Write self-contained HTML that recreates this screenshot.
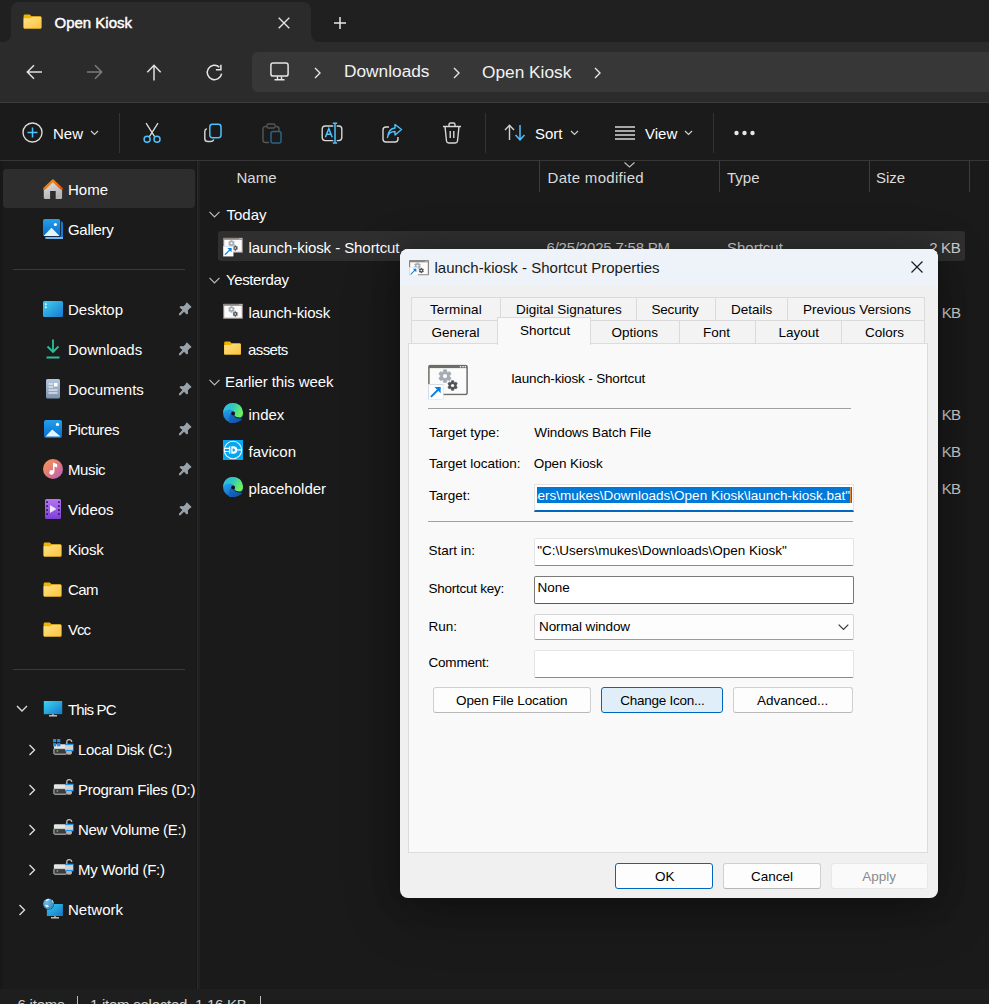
<!DOCTYPE html>
<html><head><meta charset="utf-8">
<style>
*{margin:0;padding:0;box-sizing:border-box}
html,body{width:989px;height:1004px;overflow:hidden;background:#1c1c1c;font-family:"Liberation Sans",sans-serif;color:#fff}
.a{position:absolute}
.t{position:absolute;white-space:nowrap;line-height:1}
svg.a{overflow:visible}
.nav{font-size:15px;color:#fff}
.fl{font-size:15px;color:#fff}
.hdr{font-size:15px;color:#dadada}
.kb{font-size:15px;color:#cfcfcf}
.d{font-size:13.5px;color:#000}
.tab{position:absolute;top:0;height:23px;border:1px solid #d9d9d9;border-bottom:none;background:#f0f0f0}
</style></head><body>
<svg width="0" height="0" style="position:absolute">
<defs>
 <linearGradient id="gFold" x1="0" y1="0" x2="1" y2="1"><stop offset="0" stop-color="#ffe38a"/><stop offset="1" stop-color="#f9c33c"/></linearGradient>
 <symbol id="folder" viewBox="0 0 20 16">
  <path d="M0.5 2 Q0.5 0.5 2 0.5 H7 L9 2.5 H18 Q19.5 2.5 19.5 4 V14.5 Q19.5 15.5 18.5 15.5 H1.5 Q0.5 15.5 0.5 14.5 Z" fill="#f0b400"/>
  <path d="M0.5 4.5 H8 L9.5 3 H18.5 Q19.5 3 19.5 4 V14.5 Q19.5 15.5 18.5 15.5 H1.5 Q0.5 15.5 0.5 14.5 Z" fill="url(#gFold)"/>
 </symbol>
 <symbol id="pin" viewBox="0 0 14 14">
  <path d="M8.4 0.6 Q9 0.3 9.6 0.9 L13.1 4.4 Q13.7 5 13.2 5.6 L11.6 6.6 L9.8 8.6 L10.1 11.4 L8.8 12.6 L6 9.7 L2.4 13.2 L1 13.2 L1 11.8 L4.4 8.1 L1.4 5.2 L2.8 4 L5.4 4.2 L7.4 2.4 Z" fill="#9aa2a9"/>
 </symbol>
 <symbol id="drive" viewBox="0 0 21 17">
  <path d="M2 5.2 H13.5 V10 H0.9 V6.5 Q0.9 5.2 2 5.2 Z" fill="#e4e4e4"/>
  <rect x="0.9" y="9.6" width="13" height="5.6" rx="0.8" fill="#3c3c3c" stroke="#d4d4d4" stroke-width="0.9"/>
  <circle cx="4.4" cy="11.9" r="0.85" fill="#3ddc3d"/>
  <path d="M13.8 5.2 V3.2 Q13.8 0.6 16.3 0.6 Q18.8 0.6 18.8 3" stroke="#b9b9b9" stroke-width="1.3" fill="none"/>
  <ellipse cx="16.2" cy="13.6" rx="2.8" ry="2.2" fill="#b5b5b5"/>
  <rect x="12" y="4.9" width="8.3" height="7.3" fill="#d2d2d2"/>
  <rect x="12" y="4.9" width="8.3" height="1.2" fill="#1e90e8"/>
  <rect x="12" y="10.9" width="8.3" height="1.2" fill="#1e90e8"/>
 </symbol>
 <symbol id="edge" viewBox="0 0 20 20">
  <defs>
   <linearGradient id="eg1" x1="0" y1="0" x2="0.3" y2="1"><stop offset="0" stop-color="#33b5f5"/><stop offset="1" stop-color="#1170cc"/></linearGradient>
   <linearGradient id="eg2" x1="0" y1="0" x2="1" y2="0.4"><stop offset="0" stop-color="#30b8ec"/><stop offset="0.5" stop-color="#2fc7c0"/><stop offset="1" stop-color="#6ff05a"/></linearGradient>
   <linearGradient id="eg3" x1="0" y1="0" x2="1" y2="1"><stop offset="0" stop-color="#1b6fd0"/><stop offset="1" stop-color="#0b4f9e"/></linearGradient>
  </defs>
  <circle cx="10" cy="10" r="10" fill="url(#eg1)"/>
  <path d="M0.2 8.5 Q1.5 0.2 10 0 Q19 0.2 20 9.5 Q20 14.2 16 14.6 Q12.6 14.8 11.4 12.8 Q12.8 10.6 11.2 8.8 Q9.6 7.2 6.6 6.6 Q2.6 6.4 0.2 9.6 Z" fill="url(#eg2)"/>
  <path d="M6.2 20 Q5.2 13.5 7.6 11 Q8.8 9.8 10.2 11.6 Q12.2 15.6 17 15.8 Q18.6 15.8 19.6 15.2 Q17.5 19.5 10 20 Z" fill="url(#eg3)"/>
  <path d="M10.3 12 Q12.3 15.2 16.8 15.2 Q18.8 15.2 19.7 14.4" stroke="#141414" stroke-width="0.9" fill="none"/>
  <circle cx="10.1" cy="10.4" r="1.9" fill="#141414"/>
 </symbol>
 <symbol id="gears" viewBox="0 0 40 31">
  <rect x="0.9" y="0.9" width="38.2" height="29.2" rx="1.5" fill="#fbfbfb" stroke="#6f6b66" stroke-width="1.5"/>
  <rect x="1" y="1" width="38" height="2.6" fill="#6f6b66"/>
  <circle cx="32.5" cy="2.3" r="0.8" fill="#fff"/><circle cx="35" cy="2.3" r="0.8" fill="#fff"/><circle cx="37.3" cy="2.3" r="0.8" fill="#fff"/>
  <path d="M15.13 7.40 L15.60 5.35 L18.40 5.35 L18.87 7.40 L19.70 7.88 L21.71 7.27 L23.11 9.69 L21.57 11.12 L21.57 12.08 L23.11 13.51 L21.71 15.93 L19.70 15.32 L18.87 15.80 L18.40 17.85 L15.60 17.85 L15.13 15.80 L14.30 15.32 L12.29 15.93 L10.89 13.51 L12.43 12.08 L12.43 11.12 L10.89 9.69 L12.29 7.27 L14.30 7.88Z" fill="#a5abb2" stroke="#a5abb2" stroke-width="0.8" stroke-linejoin="round"/>
  <circle cx="17" cy="11.6" r="2.1" fill="#fbfbfb"/>
  <path d="M23.18 17.80 L23.53 16.22 L25.67 16.22 L26.02 17.80 L26.66 18.17 L28.21 17.68 L29.28 19.53 L28.08 20.63 L28.08 21.37 L29.28 22.47 L28.21 24.32 L26.66 23.83 L26.02 24.20 L25.67 25.78 L23.53 25.78 L23.18 24.20 L22.54 23.83 L20.99 24.32 L19.92 22.47 L21.12 21.37 L21.12 20.63 L19.92 19.53 L20.99 17.68 L22.54 18.17Z" fill="#4f5358" stroke="#4f5358" stroke-width="0.7" stroke-linejoin="round"/>
  <circle cx="24.6" cy="21" r="1.6" fill="#fbfbfb"/>
 </symbol>
 <symbol id="gearsS" viewBox="0 0 40 31">
  <rect x="1.2" y="1.2" width="37.6" height="28.6" rx="1" fill="#fbfbfb" stroke="#8a8580" stroke-width="2.4"/>
  <rect x="1" y="1" width="38" height="3.6" fill="#8a8580"/>
  <circle cx="32.5" cy="2.3" r="0.8" fill="#fff"/><circle cx="35" cy="2.3" r="0.8" fill="#fff"/><circle cx="37.3" cy="2.3" r="0.8" fill="#fff"/>
  <path d="M15.13 7.40 L15.60 5.35 L18.40 5.35 L18.87 7.40 L19.70 7.88 L21.71 7.27 L23.11 9.69 L21.57 11.12 L21.57 12.08 L23.11 13.51 L21.71 15.93 L19.70 15.32 L18.87 15.80 L18.40 17.85 L15.60 17.85 L15.13 15.80 L14.30 15.32 L12.29 15.93 L10.89 13.51 L12.43 12.08 L12.43 11.12 L10.89 9.69 L12.29 7.27 L14.30 7.88Z" fill="#a5abb2" stroke="#a5abb2" stroke-width="0.8" stroke-linejoin="round"/>
  <circle cx="17" cy="11.6" r="2.1" fill="#fbfbfb"/>
  <path d="M23.18 17.80 L23.53 16.22 L25.67 16.22 L26.02 17.80 L26.66 18.17 L28.21 17.68 L29.28 19.53 L28.08 20.63 L28.08 21.37 L29.28 22.47 L28.21 24.32 L26.66 23.83 L26.02 24.20 L25.67 25.78 L23.53 25.78 L23.18 24.20 L22.54 23.83 L20.99 24.32 L19.92 22.47 L21.12 21.37 L21.12 20.63 L19.92 19.53 L20.99 17.68 L22.54 18.17Z" fill="#4f5358" stroke="#4f5358" stroke-width="0.7" stroke-linejoin="round"/>
  <circle cx="24.6" cy="21" r="1.6" fill="#fbfbfb"/>
 </symbol>
 <symbol id="arrowov" viewBox="0 0 15 15">
  <rect x="0.5" y="0.5" width="14.5" height="14.5" fill="#fff" stroke="#d5dbe6" stroke-width="1"/>
  <path d="M3.3 12 L11.2 4.1" stroke="#0a7fe0" stroke-width="1.9" stroke-linecap="round"/>
  <path d="M6.3 3 H12.2 V8.9 Z" fill="#0a7fe0"/>
 </symbol>
</defs>
</svg>

<!-- ============ TAB STRIP ============ -->
<div class="a" style="left:0;top:0;width:989px;height:42px;background:#202020"></div>
<div class="a" style="left:11px;top:2px;width:300px;height:40px;background:#2b2b2b;border-radius:8px 8px 0 0"></div>
<!-- inverted corners -->
<div class="a" style="left:3px;top:34px;width:8px;height:8px;background:#2b2b2b"></div>
<div class="a" style="left:3px;top:34px;width:8px;height:8px;background:#202020;border-radius:0 0 8px 0"></div>
<div class="a" style="left:311px;top:34px;width:8px;height:8px;background:#2b2b2b"></div>
<div class="a" style="left:311px;top:34px;width:8px;height:8px;background:#202020;border-radius:0 0 0 8px"></div>
<svg class="a" style="left:23px;top:14px" width="19" height="15"><use href="#folder" width="19" height="15"/></svg>
<div class="t" style="left:54.5px;top:15px;font-size:15px;-webkit-text-stroke:0.45px #fff">Open Kiosk</div>
<svg class="a" style="left:278px;top:17px" width="12" height="12"><path d="M0.7 0.7 L11.3 11.3 M11.3 0.7 L0.7 11.3" stroke="#e8e8e8" stroke-width="1.3"/></svg>
<svg class="a" style="left:334px;top:17px" width="12" height="12"><path d="M6 0 V12 M0 6 H12" stroke="#e8e8e8" stroke-width="1.5"/></svg>

<!-- ============ ADDRESS ROW ============ -->
<div class="a" style="left:0;top:42px;width:989px;height:60px;background:#2b2b2b"></div>
<div class="a" style="left:252px;top:52px;width:760px;height:40px;background:#373737;border-radius:6px"></div>
<div class="a" style="left:0;top:102px;width:989px;height:1px;background:#3b3b3b"></div>
<svg class="a" style="left:26px;top:64px" width="17" height="16"><path d="M16 8 H1.5 M8 1.3 L1.3 8 L8 14.7" stroke="#e0e0e0" stroke-width="1.5" fill="none"/></svg>
<svg class="a" style="left:86px;top:64px" width="17" height="16"><path d="M1 8 H15.5 M9 1.3 L15.7 8 L9 14.7" stroke="#7b7b7b" stroke-width="1.5" fill="none"/></svg>
<svg class="a" style="left:146px;top:64px" width="16" height="17"><path d="M8 16.5 V1.5 M1.3 8.2 L8 1.3 L14.7 8.2" stroke="#e0e0e0" stroke-width="1.5" fill="none"/></svg>
<svg class="a" style="left:206px;top:64px" width="17" height="17"><path d="M15.6 9.6 A7.2 7.2 0 1 1 13.4 3.2" stroke="#e6e6e6" stroke-width="1.5" fill="none"/><path d="M9.9 5.7 H14.9 V0.8" stroke="#e6e6e6" stroke-width="1.5" fill="none"/></svg>
<svg class="a" style="left:270px;top:62px" width="19" height="19"><rect x="0.9" y="0.9" width="17.2" height="13.2" rx="2.2" stroke="#e6e6e6" stroke-width="1.5" fill="none"/><path d="M7.5 14.5 V17 M11.5 14.5 V17 M4.5 17.8 H14.5" stroke="#e6e6e6" stroke-width="1.4"/></svg>
<svg class="a" style="left:314px;top:67px" width="7" height="12"><path d="M1 1 L6 6 L1 11" stroke="#e6e6e6" stroke-width="1.4" fill="none"/></svg>
<div class="t" style="left:344px;top:63px;font-size:17.3px;color:#f2f2f2">Downloads</div>
<svg class="a" style="left:453px;top:67px" width="7" height="12"><path d="M1 1 L6 6 L1 11" stroke="#e6e6e6" stroke-width="1.4" fill="none"/></svg>
<div class="t" style="left:482px;top:64px;font-size:17.3px;color:#f2f2f2">Open Kiosk</div>
<svg class="a" style="left:594px;top:67px" width="7" height="12"><path d="M1 1 L6 6 L1 11" stroke="#e6e6e6" stroke-width="1.4" fill="none"/></svg>

<!-- ============ TOOLBAR ============ -->
<div class="a" style="left:0;top:103px;width:989px;height:57px;background:#1b1b1b"></div>
<div class="a" style="left:0;top:160px;width:989px;height:1px;background:#363636"></div>
<svg class="a" style="left:22px;top:122px" width="21" height="21"><circle cx="10.5" cy="10.5" r="9.5" stroke="#dcdcdc" stroke-width="1.4" fill="none"/><path d="M10.5 5.5 V15.5 M5.5 10.5 H15.5" stroke="#4cc2ff" stroke-width="1.5"/></svg>
<div class="t" style="left:53px;top:125.5px;font-size:15px">New</div>
<svg class="a" style="left:90px;top:130px" width="9" height="6"><path d="M1 1 L4.5 4.5 L8 1" stroke="#cfcfcf" stroke-width="1.2" fill="none"/></svg>
<div class="a" style="left:119px;top:113px;width:1px;height:40px;background:#333"></div>
<!-- scissors -->
<svg class="a" style="left:142px;top:122px" width="20" height="22"><path d="M4.1 1.1 L12.6 14.6 M16 1.1 L7.4 14.6" stroke="#dedede" stroke-width="1.3" fill="none"/><circle cx="5.1" cy="17.3" r="3" stroke="#4cc2ff" stroke-width="1.5" fill="none"/><circle cx="15" cy="17.3" r="3" stroke="#4cc2ff" stroke-width="1.5" fill="none"/></svg>
<!-- copy -->
<svg class="a" style="left:202px;top:123px" width="20" height="20"><rect x="7.8" y="1.3" width="11.2" height="13.4" rx="2.6" stroke="#4cc2ff" stroke-width="1.5" fill="none"/><path d="M4.8 5.7 Q2.8 6.3 2.8 8.6 V15.4 Q2.8 18.5 5.9 18.5 H9 Q11.2 18.5 11.8 16.6" stroke="#d0d0d0" stroke-width="1.5" fill="none"/></svg>
<!-- paste disabled -->
<svg class="a" style="left:262px;top:123px" width="20" height="21"><path d="M5 3.5 H3.5 Q1 3.5 1 6 V17 Q1 19.5 3.5 19.5 H7" stroke="#555" stroke-width="1.4" fill="none"/><rect x="5" y="1" width="8" height="4" rx="1.2" stroke="#555" stroke-width="1.3" fill="none"/><path d="M13.5 3.5 H14.5 Q17 3.5 17 6 V8" stroke="#555" stroke-width="1.4" fill="none"/><rect x="9" y="8.5" width="10" height="11.5" rx="2" stroke="#2b6388" stroke-width="1.5" fill="none"/></svg>
<!-- rename -->
<svg class="a" style="left:321px;top:122px" width="22" height="22"><path d="M12.3 4 H4.2 Q1.2 4 1.2 7 V15.6 Q1.2 18.6 4.2 18.6 H12.3 M15.7 4 H17.8 Q20.8 4 20.8 7 V15.6 Q20.8 18.6 17.8 18.6 H15.7" stroke="#d8d8d8" stroke-width="1.4" fill="none"/><path d="M4.4 15.2 L7.8 6.6 L11.2 15.2 M5.6 12.2 H10" stroke="#4cc2ff" stroke-width="1.5" fill="none"/><path d="M14 1.2 V21 M11.8 1.2 H16.2 M11.8 21 H16.2" stroke="#4cc2ff" stroke-width="1.5" fill="none"/></svg>
<!-- share -->
<svg class="a" style="left:382px;top:124px" width="21" height="19"><path d="M7 3 H4 Q1 3 1 6 V15 Q1 18 4 18 H13 Q16 18 16 15 V13" stroke="#d8d8d8" stroke-width="1.4" fill="none"/><path d="M5.5 13.5 Q6.5 7.5 13 7.5 V11 L19.5 5.5 L13 0.5 V4 Q6.5 4.5 5.5 13.5 Z" stroke="#4cc2ff" stroke-width="1.4" fill="none" stroke-linejoin="round"/></svg>
<!-- delete -->
<svg class="a" style="left:442px;top:122px" width="20" height="22"><path d="M1 4.5 H19 M7 4.5 V2.5 Q7 1 8.5 1 H11.5 Q13 1 13 2.5 V4.5 M3 4.5 L4.5 19 Q4.8 21 6.8 21 H13.2 Q15.2 21 15.5 19 L17 4.5" stroke="#d8d8d8" stroke-width="1.4" fill="none"/><path d="M8.2 9 V16 M11.8 9 V16" stroke="#d8d8d8" stroke-width="1.4"/></svg>
<div class="a" style="left:485px;top:113px;width:1px;height:40px;background:#333"></div>
<!-- sort -->
<svg class="a" style="left:504px;top:124px" width="22" height="17"><path d="M5.5 16 V1.5 M1 6 L5.5 1.2 L10 6" stroke="#d0d0d0" stroke-width="1.4" fill="none"/><path d="M16 1 V15.5 M11.5 11 L16 15.8 L20.5 11" stroke="#4cc2ff" stroke-width="1.5" fill="none"/></svg>
<div class="t" style="left:535px;top:125.5px;font-size:15px">Sort</div>
<svg class="a" style="left:570px;top:130px" width="9" height="6"><path d="M1 1 L4.5 4.5 L8 1" stroke="#cfcfcf" stroke-width="1.2" fill="none"/></svg>
<!-- view -->
<svg class="a" style="left:615px;top:126px" width="20" height="14"><path d="M0 1 H20 M0 5 H20 M0 9 H20 M0 13 H20" stroke="#d8d8d8" stroke-width="1.3"/></svg>
<div class="t" style="left:645px;top:125.5px;font-size:15px">View</div>
<svg class="a" style="left:684px;top:130px" width="9" height="6"><path d="M1 1 L4.5 4.5 L8 1" stroke="#cfcfcf" stroke-width="1.2" fill="none"/></svg>
<div class="a" style="left:713px;top:113px;width:1px;height:40px;background:#333"></div>
<svg class="a" style="left:734px;top:130px" width="22" height="6"><circle cx="2.5" cy="3" r="2.2" fill="#e6e6e6"/><circle cx="10.5" cy="3" r="2.2" fill="#e6e6e6"/><circle cx="18.5" cy="3" r="2.2" fill="#e6e6e6"/></svg>

<!-- ============ MAIN ============ -->
<div class="a" style="left:0;top:161px;width:196px;height:828px;background:#1b1b1b"></div>
<div class="a" style="left:0;top:161px;width:3px;height:828px;background:#181818"></div>
<div class="a" style="left:196px;top:161px;width:1px;height:828px;background:#151515"></div>
<div class="a" style="left:197px;top:161px;width:1px;height:828px;background:#2b2b2b"></div>
<div class="a" style="left:198px;top:161px;width:2px;height:828px;background:#202020"></div>
<div class="a" style="left:200px;top:161px;width:789px;height:828px;background:#1a1a1a"></div>
<div class="a" style="left:0;top:989px;width:989px;height:15px;background:#1e1e1e"></div>
<!-- status -->
<div class="t" style="left:17.5px;top:996.5px;font-size:15px;color:#d0d0d0;letter-spacing:-0.2px">6 items</div>
<div class="a" style="left:77px;top:996px;width:1px;height:10px;background:#bbb"></div>
<div class="t" style="left:90px;top:996.5px;font-size:15px;color:#d0d0d0;letter-spacing:-0.25px">1 item selected&nbsp; 1.16 KB</div>
<div class="a" style="left:260px;top:996px;width:1px;height:10px;background:#bbb"></div>

<!-- NAV -->
<div class="a" style="left:3px;top:169px;width:192px;height:39px;background:#2d2d2d;border-radius:4px"></div>
<svg class="a" style="left:43px;top:179px" width="21" height="21"><defs><linearGradient id="gHouse" x1="0" y1="0" x2="0.4" y2="1"><stop offset="0" stop-color="#e2e4e8"/><stop offset="1" stop-color="#b4b4b4"/></linearGradient><linearGradient id="gRoof" x1="0" y1="0" x2="1" y2="1"><stop offset="0" stop-color="#f99a14"/><stop offset="1" stop-color="#e4520a"/></linearGradient></defs><path d="M0.8 10 L9.9 1.5 L19.1 10 V18.4 Q19.1 19.9 17.6 19.9 H12.7 V12 H7.1 V19.9 H2.3 Q0.8 19.9 0.8 18.4 Z" fill="url(#gHouse)"/><path d="M1.4 9.6 L9.9 1.6 L18.5 9.6" stroke="url(#gRoof)" stroke-width="2.6" fill="none" stroke-linecap="round" stroke-linejoin="round"/></svg>
<div class="t nav" style="left:68px;top:181.5px">Home</div>
<svg class="a" style="left:43px;top:219px" width="21" height="21"><defs><linearGradient id="gGal" x1="0" y1="0" x2="0" y2="1"><stop offset="0" stop-color="#22a0ec"/><stop offset="1" stop-color="#0a6cc8"/></linearGradient></defs><rect x="2.3" y="2.6" width="17.7" height="17.4" rx="1.6" fill="#1778d6"/><rect x="2.3" y="18" width="17.7" height="2" rx="0.8" fill="#78b6ec"/><rect x="-0.5" y="-0.5" width="18.5" height="18.5" rx="2.2" fill="#1b1b1b"/><rect x="0" y="0" width="17.2" height="17.2" rx="1.8" fill="url(#gGal)"/><path d="M0.6 17 L8.5 8.8 L16.6 17 Z" fill="#e6f5fd"/><circle cx="12.4" cy="5.5" r="1.6" fill="#fff"/></svg>
<div class="t nav" style="left:68px;top:221.5px;letter-spacing:-0.3px">Gallery</div>
<div class="a" style="left:13px;top:269px;width:172px;height:1px;background:#3a3a3a"></div>

<svg class="a" style="left:43px;top:301px" width="20" height="16"><defs><linearGradient id="gDesk" x1="0" y1="0" x2="1" y2="1"><stop offset="0" stop-color="#40d2ee"/><stop offset="1" stop-color="#1878d0"/></linearGradient></defs><rect x="0" y="0" width="20" height="16" rx="1.5" fill="url(#gDesk)"/><rect x="2" y="2.5" width="1.6" height="1.6" fill="#fff"/><rect x="2" y="5.5" width="1.6" height="1.6" fill="#fff"/></svg>
<div class="t nav" style="left:68px;top:301.5px">Desktop</div>
<svg class="a" style="left:46px;top:339px" width="14" height="20"><path d="M7 0.5 V12.5 M1.5 7.5 L7 13 L12.5 7.5" stroke="#2dbd9b" stroke-width="1.8" fill="none"/><path d="M0.5 18.5 H13.5" stroke="#2dbd9b" stroke-width="2"/></svg>
<div class="t nav" style="left:68px;top:341.5px">Downloads</div>
<svg class="a" style="left:46px;top:379px" width="14" height="20"><defs><linearGradient id="gDoc" x1="0" y1="0" x2="0" y2="1"><stop offset="0" stop-color="#b5c7dd"/><stop offset="1" stop-color="#7c93ad"/></linearGradient></defs><rect x="0" y="0" width="14" height="19.5" rx="1.5" fill="url(#gDoc)"/><path d="M2.5 5 H7 M2.5 8 H7 M2.5 11 H11.5 M2.5 14 H11.5" stroke="#fff" stroke-width="1"/><rect x="8" y="4" width="3.5" height="3.5" fill="#fff"/></svg>
<div class="t nav" style="left:68px;top:381.5px">Documents</div>
<svg class="a" style="left:44px;top:420px" width="18" height="18"><defs><linearGradient id="gPic" x1="0" y1="0" x2="0" y2="1"><stop offset="0" stop-color="#22a0ec"/><stop offset="1" stop-color="#0a6cc8"/></linearGradient></defs><rect x="0" y="0" width="18" height="18" rx="2" fill="url(#gPic)"/><path d="M1.6 16.6 L8.2 9.6 L16.6 16.6 Z" fill="#e6f5fd"/><circle cx="13.5" cy="4.4" r="1.6" fill="#fff"/></svg>
<div class="t nav" style="left:68px;top:421.5px;letter-spacing:-0.4px">Pictures</div>
<svg class="a" style="left:43px;top:459px" width="20" height="20"><defs><linearGradient id="gMus" x1="0" y1="0.2" x2="0.85" y2="1"><stop offset="0" stop-color="#f5945a"/><stop offset="0.6" stop-color="#db7282"/><stop offset="1" stop-color="#b066c8"/></linearGradient></defs><circle cx="10" cy="10" r="10" fill="url(#gMus)"/><path d="M10.7 13.6 V4.2" stroke="#fff" stroke-width="1.5"/><path d="M10.2 3.6 L14.2 5.2 V8.4 L10.2 7.2 Z" fill="#fff"/><circle cx="8.6" cy="13.4" r="2.3" fill="#fff"/></svg>
<div class="t nav" style="left:68px;top:461.5px;letter-spacing:-0.4px">Music</div>
<svg class="a" style="left:45px;top:499px" width="16" height="20"><defs><linearGradient id="gVid" x1="0" y1="0" x2="0" y2="1"><stop offset="0" stop-color="#b476f2"/><stop offset="1" stop-color="#7e3fda"/></linearGradient></defs><rect x="0" y="0" width="16" height="20" rx="1.5" fill="url(#gVid)"/><g fill="#3a1f66"><rect x="1.2" y="2.2" width="1.8" height="1.8"/><rect x="1.2" y="6.2" width="1.8" height="1.8"/><rect x="1.2" y="10.2" width="1.8" height="1.8"/><rect x="1.2" y="14.2" width="1.8" height="1.8"/><rect x="13" y="2.2" width="1.8" height="1.8"/><rect x="13" y="6.2" width="1.8" height="1.8"/><rect x="13" y="10.2" width="1.8" height="1.8"/><rect x="13" y="14.2" width="1.8" height="1.8"/></g><path d="M5 6 L11.5 10 L5 14 Z" fill="#ece4fb"/></svg>
<div class="t nav" style="left:68px;top:501.5px">Videos</div>
<svg class="a" style="left:43px;top:542px" width="19" height="15"><use href="#folder" width="19" height="15"/></svg>
<div class="t nav" style="left:68px;top:541.5px;letter-spacing:-0.25px">Kiosk</div>
<svg class="a" style="left:43px;top:582px" width="19" height="15"><use href="#folder" width="19" height="15"/></svg>
<div class="t nav" style="left:68px;top:581.5px;letter-spacing:-0.6px">Cam</div>
<svg class="a" style="left:43px;top:622px" width="19" height="15"><use href="#folder" width="19" height="15"/></svg>
<div class="t nav" style="left:68px;top:621.5px;letter-spacing:-1px">Vcc</div>
<svg class="a" style="left:178px;top:302px" width="14" height="14"><use href="#pin" width="14" height="14"/></svg>
<svg class="a" style="left:178px;top:342px" width="14" height="14"><use href="#pin" width="14" height="14"/></svg>
<svg class="a" style="left:178px;top:382px" width="14" height="14"><use href="#pin" width="14" height="14"/></svg>
<svg class="a" style="left:178px;top:422px" width="14" height="14"><use href="#pin" width="14" height="14"/></svg>
<svg class="a" style="left:178px;top:462px" width="14" height="14"><use href="#pin" width="14" height="14"/></svg>
<svg class="a" style="left:178px;top:502px" width="14" height="14"><use href="#pin" width="14" height="14"/></svg>
<div class="a" style="left:13px;top:669px;width:172px;height:1px;background:#3a3a3a"></div>

<svg class="a" style="left:16px;top:705px" width="12" height="8"><path d="M1 1 L6 6 L11 1" stroke="#dcdcdc" stroke-width="1.4" fill="none"/></svg>
<svg class="a" style="left:43px;top:700px" width="20" height="18"><defs><linearGradient id="gPC" x1="0" y1="0" x2="1" y2="1"><stop offset="0" stop-color="#3ad6f2"/><stop offset="1" stop-color="#1878cc"/></linearGradient></defs><rect x="0.8" y="1" width="18.4" height="13.2" fill="url(#gPC)"/><path d="M6 15.8 H14" stroke="#c9ccd0" stroke-width="1.4"/><path d="M10 14 V15.5" stroke="#c9ccd0" stroke-width="1.4"/></svg>
<div class="t nav" style="left:68px;top:701.5px;letter-spacing:-0.8px">This PC</div>
<svg class="a" style="left:28px;top:744px" width="8" height="12"><path d="M1.5 1 L6.5 6 L1.5 11" stroke="#dcdcdc" stroke-width="1.4" fill="none"/></svg>
<svg class="a" style="left:53px;top:739px" width="21" height="17"><use href="#drive" width="21" height="17"/><rect x="0" y="0" width="3.2" height="3.2" fill="#1a8ff0"/><rect x="4.1" y="0" width="3.2" height="3.2" fill="#1a8ff0"/><rect x="0" y="4.1" width="3.2" height="3.2" fill="#1a8ff0"/><rect x="4.1" y="4.1" width="3.2" height="3.2" fill="#1a8ff0"/></svg>
<div class="t nav" style="left:78px;top:741.5px;letter-spacing:-0.3px">Local Disk (C:)</div>
<svg class="a" style="left:28px;top:784px" width="8" height="12"><path d="M1.5 1 L6.5 6 L1.5 11" stroke="#dcdcdc" stroke-width="1.4" fill="none"/></svg>
<svg class="a" style="left:53px;top:779px" width="21" height="17"><use href="#drive" width="21" height="17"/></svg>
<div class="t nav" style="left:78px;top:781.5px;letter-spacing:-0.3px">Program Files (D:)</div>
<svg class="a" style="left:28px;top:824px" width="8" height="12"><path d="M1.5 1 L6.5 6 L1.5 11" stroke="#dcdcdc" stroke-width="1.4" fill="none"/></svg>
<svg class="a" style="left:53px;top:819px" width="21" height="17"><use href="#drive" width="21" height="17"/></svg>
<div class="t nav" style="left:78px;top:821.5px;letter-spacing:-0.3px">New Volume (E:)</div>
<svg class="a" style="left:28px;top:864px" width="8" height="12"><path d="M1.5 1 L6.5 6 L1.5 11" stroke="#dcdcdc" stroke-width="1.4" fill="none"/></svg>
<svg class="a" style="left:53px;top:859px" width="21" height="17"><use href="#drive" width="21" height="17"/></svg>
<div class="t nav" style="left:78px;top:861.5px;letter-spacing:-0.3px">My World (F:)</div>
<svg class="a" style="left:18px;top:904px" width="8" height="12"><path d="M1.5 1 L6.5 6 L1.5 11" stroke="#dcdcdc" stroke-width="1.4" fill="none"/></svg>
<svg class="a" style="left:42px;top:897px" width="22" height="23"><defs><linearGradient id="gNet" x1="0" y1="0" x2="1" y2="1"><stop offset="0" stop-color="#30cdf0"/><stop offset="1" stop-color="#1676c8"/></linearGradient><radialGradient id="gGlobe" cx="0.35" cy="0.35" r="0.8"><stop offset="0" stop-color="#6cc0ea"/><stop offset="1" stop-color="#2f7fb8"/></radialGradient></defs><rect x="4.9" y="7" width="16" height="12" fill="url(#gNet)"/><path d="M9 20.8 H17" stroke="#c9ccd0" stroke-width="1.4"/><path d="M13 19 V20.5" stroke="#c9ccd0" stroke-width="1.4"/><circle cx="6.5" cy="7" r="5.6" fill="#1b1b1b"/><circle cx="6.5" cy="7" r="5.4" fill="url(#gGlobe)"/><path d="M3.5 3.2 Q5.5 1.8 7.8 2.2 Q6.5 3.8 4.5 4.2 Z M3 7.8 Q5 7.5 7 9.2 Q6 10.8 4.5 10.2 Q3.5 9 3 7.8 Z M9.8 2.6 Q11.8 4.2 11.5 6.5 Q10.2 5.5 9.8 2.6 Z" fill="#e8f4fb"/></svg>
<div class="t nav" style="left:68px;top:901.5px">Network</div>

<!-- FILE LIST -->
<div class="t hdr" style="left:236.5px;top:169.5px">Name</div>
<div class="a" style="left:539px;top:161px;width:1px;height:31px;background:#3c3c3c"></div>
<svg class="a" style="left:624px;top:162px" width="11" height="6"><path d="M0.5 0.5 L5.5 5 L10.5 0.5" stroke="#bdbdbd" stroke-width="1.1" fill="none"/></svg>
<div class="t hdr" style="left:547.5px;top:169.5px;letter-spacing:0.3px">Date modified</div>
<div class="a" style="left:719px;top:161px;width:1px;height:31px;background:#3c3c3c"></div>
<div class="t hdr" style="left:727px;top:169.5px">Type</div>
<div class="a" style="left:869px;top:161px;width:1px;height:31px;background:#3c3c3c"></div>
<div class="t hdr" style="left:876px;top:169.5px">Size</div>
<div class="a" style="left:969px;top:161px;width:1px;height:31px;background:#3c3c3c"></div>

<svg class="a" style="left:209px;top:211px" width="11" height="7"><path d="M0.5 0.8 L5.5 5.8 L10.5 0.8" stroke="#bdbdbd" stroke-width="1.2" fill="none"/></svg>
<div class="t fl" style="left:226.5px;top:206.5px">Today</div>
<div class="a" style="left:218px;top:231px;width:747px;height:30px;background:#2f2f2f;border-radius:3px"></div>
<svg class="a" style="left:223px;top:237px" width="21" height="20"><use href="#gearsS" x="0" y="0.5" width="20" height="15.5"/><use href="#arrowov" x="0" y="9" width="10.5" height="10.5"/></svg>
<div class="t fl" style="left:248.5px;top:239.5px;letter-spacing:-0.07px">launch-kiosk - Shortcut</div>
<div class="t kb" style="left:546.5px;top:239.5px;letter-spacing:-0.2px">6/25/2025 7:58 PM</div>
<div class="t kb" style="left:727px;top:239.5px">Shortcut</div>
<div class="t kb" style="right:28.5px;top:239.5px;letter-spacing:-0.3px">2 KB</div>

<svg class="a" style="left:209px;top:277px" width="11" height="7"><path d="M0.5 0.8 L5.5 5.8 L10.5 0.8" stroke="#bdbdbd" stroke-width="1.2" fill="none"/></svg>
<div class="t fl" style="left:226px;top:271.5px;letter-spacing:-0.4px">Yesterday</div>
<svg class="a" style="left:223px;top:303px" width="20" height="16"><use href="#gearsS" x="0" y="0.5" width="20" height="15.5"/></svg>
<div class="t fl" style="left:248.5px;top:305px;letter-spacing:-0.15px">launch-kiosk</div>
<div class="t kb" style="right:28.5px;top:305px;letter-spacing:-0.6px">KB</div>
<svg class="a" style="left:223px;top:341px" width="19" height="14"><use href="#folder" width="19" height="14" preserveAspectRatio="none"/></svg>
<div class="t fl" style="left:248px;top:342px;letter-spacing:-0.6px">assets</div>

<svg class="a" style="left:209px;top:379px" width="11" height="7"><path d="M0.5 0.8 L5.5 5.8 L10.5 0.8" stroke="#bdbdbd" stroke-width="1.2" fill="none"/></svg>
<div class="t fl" style="left:225px;top:373.5px;letter-spacing:-0.1px">Earlier this week</div>
<svg class="a" style="left:223px;top:403px" width="20" height="20"><use href="#edge" width="20" height="20"/></svg>
<div class="t fl" style="left:248.5px;top:407px">index</div>
<div class="t kb" style="right:28.5px;top:407px;letter-spacing:-0.6px">KB</div>
<svg class="a" style="left:223px;top:440px" width="20" height="20"><rect width="20" height="20" fill="#07a6f0"/><circle cx="10" cy="10" r="8.7" stroke="#e6f6ff" stroke-width="1.1" fill="none"/><path d="M8.3 6.2 H10.2 Q14.4 6.2 14.4 10 Q14.4 13.8 10.2 13.8 H8.3 Z M9.6 8.4 V11.4 H10.6 Q12 11.4 12 9.9 Q12 8.4 10.6 8.4 Z" fill="#fff" fill-rule="evenodd"/><path d="M6.6 6.3 Q7.2 10 6.6 13.7" stroke="#fff" stroke-width="1.2" fill="none"/><path d="M1.3 8.4 H6.6 M1.3 11.5 H6.6" stroke="#fff" stroke-width="1.1"/><path d="M14.2 9.9 H18.8" stroke="#e6f6ff" stroke-width="1.4"/></svg>
<div class="t fl" style="left:248.5px;top:444px">favicon</div>
<div class="t kb" style="right:28.5px;top:444px;letter-spacing:-0.6px">KB</div>
<svg class="a" style="left:223px;top:477px" width="20" height="20"><use href="#edge" width="20" height="20"/></svg>
<div class="t fl" style="left:248.5px;top:481px">placeholder</div>
<div class="t kb" style="right:28.5px;top:481px;letter-spacing:-0.6px">KB</div>


<!-- ============ DIALOG ============ -->
<div class="a" style="left:400px;top:249px;width:538px;height:649px;border-radius:8px;box-shadow:0 14px 56px rgba(0,0,0,0.3),0 2px 28px rgba(0,0,0,0.22)"></div>
<div class="a" style="left:400px;top:249px;width:538px;height:649px;background:#f0f0f0;border-radius:8px;overflow:hidden">
 <div class="a" style="left:0;top:0;width:538px;height:37px;background:#edf3f8"></div>
</div>
<svg class="a" style="left:409px;top:259px" width="20" height="18"><use href="#gearsS" x="0" y="1" width="20" height="15.5"/><use href="#arrowov" x="0" y="8" width="9" height="9"/></svg>
<div class="t" style="left:434.5px;top:259.7px;font-size:15px;color:#1a1a1a">launch-kiosk - Shortcut Properties</div>
<svg class="a" style="left:911px;top:261px" width="12" height="12"><path d="M0.5 0.5 L11.5 11.5 M11.5 0.5 L0.5 11.5" stroke="#1a1a1a" stroke-width="1.2"/></svg>

<!-- tabs row 1 -->
<div class="a" style="left:411px;top:297px;width:90px;height:24px;background:#f3f3f3;border:1px solid #dadada;border-bottom:none"></div>
<div class="a" style="left:500px;top:297px;width:137px;height:24px;background:#f3f3f3;border:1px solid #dadada;border-bottom:none"></div>
<div class="a" style="left:636px;top:297px;width:80px;height:24px;background:#f3f3f3;border:1px solid #dadada;border-bottom:none"></div>
<div class="a" style="left:715px;top:297px;width:73px;height:24px;background:#f3f3f3;border:1px solid #dadada;border-bottom:none"></div>
<div class="a" style="left:787px;top:297px;width:138px;height:24px;background:#f3f3f3;border:1px solid #dadada;border-bottom:none"></div>
<div class="t d" style="left:430px;top:303.4px;letter-spacing:0.1px">Terminal</div>
<div class="t d" style="left:516px;top:303.4px">Digital Signatures</div>
<div class="t d" style="left:651.5px;top:303.4px;letter-spacing:-0.2px">Security</div>
<div class="t d" style="left:731px;top:303.4px">Details</div>
<div class="t d" style="left:803px;top:303.4px">Previous Versions</div>
<!-- tabs row 2 -->
<div class="a" style="left:411px;top:320px;width:87px;height:24px;background:#f3f3f3;border:1px solid #dadada"></div>
<div class="a" style="left:590px;top:320px;width:90px;height:24px;background:#f3f3f3;border:1px solid #dadada"></div>
<div class="a" style="left:679px;top:320px;width:77px;height:24px;background:#f3f3f3;border:1px solid #dadada"></div>
<div class="a" style="left:755px;top:320px;width:87px;height:24px;background:#f3f3f3;border:1px solid #dadada"></div>
<div class="a" style="left:841px;top:320px;width:84px;height:24px;background:#f3f3f3;border:1px solid #dadada"></div>
<!-- panel -->
<div class="a" style="left:408px;top:343px;width:520px;height:510px;background:#f9f9f9;border:1px solid #dcdcdc"></div>
<!-- selected tab -->
<div class="a" style="left:497px;top:317px;width:94px;height:28px;background:#f9f9f9;border:1px solid #dadada;border-bottom:none"></div>
<div class="t d" style="left:431.5px;top:326.3px">General</div>
<div class="t d" style="left:520px;top:323.5px">Shortcut</div>
<div class="t d" style="left:611.5px;top:326.3px">Options</div>
<div class="t d" style="left:703px;top:326.3px">Font</div>
<div class="t d" style="left:778.5px;top:326.3px">Layout</div>
<div class="t d" style="left:865px;top:326.3px">Colors</div>

<!-- panel content -->
<svg class="a" style="left:428px;top:364px" width="41" height="37"><use href="#gears" x="0" y="0.5" width="40" height="31"/><use href="#arrowov" x="0" y="20" width="15.5" height="15.5"/></svg>
<div class="t d" style="left:511.5px;top:371.6px;letter-spacing:-0.16px">launch-kiosk - Shortcut</div>
<div class="a" style="left:428px;top:408px;width:423px;height:1px;background:#a0a0a0"></div>

<div class="t d" style="left:429px;top:425.8px">Target type:</div>
<div class="t d" style="left:534.3px;top:425.8px;letter-spacing:-0.1px">Windows Batch File</div>
<div class="t d" style="left:429px;top:457.3px">Target location:</div>
<div class="t d" style="left:533.8px;top:457.3px;letter-spacing:-0.1px">Open Kiosk</div>
<div class="t d" style="left:429px;top:489.4px">Target:</div>
<div class="a" style="left:534px;top:484px;width:320px;height:28px;background:#fff;border:1px solid #e3e3e3;border-bottom:2px solid #0067c0;overflow:hidden">
  <div class="a" style="left:2px;top:2px;width:315px;height:15.5px;background:#0078d7"></div>
  <div class="t" style="right:3px;top:4px;font-size:13.5px;color:#fff">"C:\Users\mukes\Downloads\Open Kiosk\launch-kiosk.bat"</div>
  <div class="a" style="left:315px;top:2px;width:1px;height:15.5px;background:#e08a3a"></div>
</div>
<div class="a" style="left:428px;top:521px;width:425px;height:1px;background:#a0a0a0"></div>

<div class="t d" style="left:428.5px;top:543.5px">Start in:</div>
<div class="a" style="left:534px;top:538px;width:320px;height:28px;background:#fff;border:1px solid #e5e5e5;border-bottom:1px solid #8a8a8a;border-radius:2px"></div>
<div class="t d" style="left:537.2px;top:543.5px">"C:\Users\mukes\Downloads\Open Kiosk"</div>
<div class="t d" style="left:428.5px;top:582.1px;letter-spacing:-0.25px">Shortcut key:</div>
<div class="a" style="left:534px;top:576px;width:320px;height:28px;background:#fff;border:1px solid #7a7a7a;border-bottom:1.5px solid #5a5a5a;border-radius:2px"></div>
<div class="t d" style="left:537.5px;top:581.1px">None</div>
<div class="t d" style="left:428.5px;top:620.2px">Run:</div>
<div class="a" style="left:534px;top:614px;width:320px;height:26px;background:#fdfdfd;border:1px solid #d6d6d6;border-bottom:1px solid #9a9a9a;border-radius:2px"></div>
<div class="t d" style="left:539px;top:620.2px;letter-spacing:-0.1px">Normal window</div>
<svg class="a" style="left:838px;top:624px" width="11" height="7"><path d="M0.7 0.7 L5.5 5.5 L10.3 0.7" stroke="#333" stroke-width="1.2" fill="none"/></svg>
<div class="t d" style="left:428.5px;top:656.1px;letter-spacing:-0.2px">Comment:</div>
<div class="a" style="left:534px;top:650px;width:320px;height:28px;background:#fff;border:1px solid #e5e5e5;border-bottom:1px solid #8a8a8a;border-radius:2px"></div>

<div class="a" style="left:433px;top:687px;width:158px;height:26px;background:#fdfdfd;border:1px solid #d0d0d0;border-bottom-color:#b8b8b8;border-radius:3px"></div>
<div class="t d" style="left:456px;top:693.7px;letter-spacing:-0.1px">Open File Location</div>
<div class="a" style="left:601px;top:687px;width:122px;height:26px;background:#e0eef9;border:1px solid #0067c0;border-radius:3px"></div>
<div class="t d" style="left:620.3px;top:693.7px;letter-spacing:-0.25px">Change Icon...</div>
<div class="a" style="left:733px;top:687px;width:120px;height:26px;background:#fdfdfd;border:1px solid #d0d0d0;border-bottom-color:#b8b8b8;border-radius:3px"></div>
<div class="t d" style="left:757px;top:693.7px">Advanced...</div>

<div class="a" style="left:615px;top:863px;width:98px;height:26px;background:#fdfdfd;border:1px solid #0067c0;border-radius:3px"></div>
<div class="t d" style="left:655px;top:869.7px">OK</div>
<div class="a" style="left:723px;top:863px;width:98px;height:26px;background:#fdfdfd;border:1px solid #d0d0d0;border-bottom-color:#b8b8b8;border-radius:3px"></div>
<div class="t d" style="left:751px;top:869.7px">Cancel</div>
<div class="a" style="left:831px;top:863px;width:97px;height:26px;background:#fafafa;border:1px solid #e8e8e8;border-radius:3px"></div>
<div class="t d" style="left:862.3px;top:869.7px;color:#8a8a8a">Apply</div>

</body></html>
